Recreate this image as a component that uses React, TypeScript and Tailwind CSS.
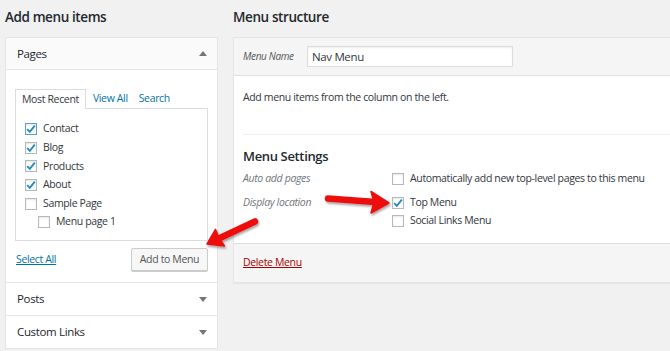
import React from 'react';

const font = { fontFamily: '"Open Sans", "Noto Sans", sans-serif' };

const Check = ({ checked, focus }: { checked?: boolean; focus?: boolean }) => (
  <span
    className={`relative inline-block w-[12px] h-[12px] shrink-0 bg-white border ${
      focus ? 'border-[#5b9dd9]' : 'border-[#b4b9be]'
    } shadow-[inset_0_1px_2px_rgba(0,0,0,0.1)]`}
  >
    {checked && (
      <svg viewBox="0 0 12 12" className="absolute -left-[1px] -top-[1px] w-[12px] h-[12px]">
        <path d="M2.2 6.2 L4.8 8.8 L9.8 2.6" fill="none" stroke="#1e8cbe" strokeWidth="1.8" />
      </svg>
    )}
  </span>
);

const Row = ({ label, checked, focus, indent }: { label: string; checked?: boolean; focus?: boolean; indent?: boolean }) => (
  <div className={`flex items-center gap-[6px] h-[18.6px] ${indent ? 'pl-[13px]' : ''}`}>
    <Check checked={checked} focus={focus} />
    <span>{label}</span>
  </div>
);

const Tri = ({ up }: { up?: boolean }) => (
  <svg viewBox="0 0 8 5" className="w-[8px] h-[5px]">
    <path d={up ? 'M0 5 L4 0 L8 5 Z' : 'M0 0 L4 5 L8 0 Z'} fill="#72777c" />
  </svg>
);

export default function App() {
  return (
    <div
      className="relative w-[670px] h-[351px] overflow-hidden bg-[#f1f1f1] text-[#32373c] text-[10.5px] tracking-[-0.35px] flex"
      style={font}
    >
      {/* left column */}
      <div className="w-[213px] ml-[5px] shrink-0 flex flex-col">
        <div className="h-[37px] pt-[7px] text-[13.5px] font-semibold text-[#23282d] leading-[20px] tracking-[-0.4px]">Add menu items</div>
        <div className="border border-[#e5e5e5] bg-white">
          <div className="h-[32px] bg-[#fafafa] border-b border-[#e5e5e5] flex items-center justify-between pl-[11px] pr-[10px]">
            <span className="text-[11.5px] font-medium text-[#23282d]">Pages</span>
            <Tri up />
          </div>
          <div className="px-[9px] pt-[18px] pb-[11px]">
            <div className="flex items-end h-[20px] text-[10.5px]">
              <div className="h-[20px] px-[6px] border border-b-0 border-[#dcdcde] bg-white relative top-[1px] flex items-center text-[#32373c]">
                Most Recent
              </div>
              <span className="ml-[7px] h-[19px] flex items-center text-[#0073aa]">View All</span>
              <span className="ml-[11px] h-[19px] flex items-center text-[#0073aa]">Search</span>
            </div>
            <div className="border border-[#dcdcde] pl-[9px] pt-[11px] pb-[8px] h-[133px]">
              <Row label="Contact" checked focus />
              <Row label="Blog" checked />
              <Row label="Products" checked />
              <Row label="About" checked />
              <Row label="Sample Page" />
              <Row label="Menu page 1" indent />
            </div>
            <div className="flex items-center justify-between mt-[7px]">
              <span className="text-[#0073aa] underline ml-[1px]">Select All</span>
              <span className="h-[23px] w-[77px] justify-center border border-[#cccccc] bg-[#f7f7f7] rounded-[2px] flex items-center text-[#555] shadow-[0_1px_0_#ccc]">
                Add to Menu
              </span>
            </div>
          </div>
        </div>
        <div className="h-[33px] border border-t-0 border-[#e5e5e5] bg-white flex items-center justify-between pl-[11px] pr-[10px]">
          <span className="text-[11.5px] font-medium text-[#23282d]">Posts</span>
          <Tri />
        </div>
        <div className="h-[33px] border border-t-0 border-[#e5e5e5] bg-white flex items-center justify-between pl-[11px] pr-[10px]">
          <span className="text-[11.5px] font-medium text-[#23282d]">Custom Links</span>
          <Tri />
        </div>
      </div>

      {/* right column */}
      <div className="ml-[15px] w-[460px] shrink-0 flex flex-col">
        <div className="h-[37px] pt-[7px] text-[13.5px] font-semibold text-[#23282d] leading-[20px] tracking-[-0.4px]">Menu structure</div>
        <div className="border border-[#e5e5e5] shadow-[0_1px_1px_rgba(0,0,0,0.04)]">
          <div className="h-[38px] bg-[#f5f5f5] border-b border-[#dfdfdf] flex items-center pl-[9px]">
            <span className="italic text-[10px] text-[#555] w-[64px]">Menu Name</span>
            <div className="w-[206px] h-[21px] bg-white border border-[#ddd] shadow-[inset_0_1px_2px_rgba(0,0,0,0.07)] flex items-center pl-[4px] text-[11.5px] text-[#32373c]">
              Nav Menu
            </div>
          </div>
          <div className="bg-white pl-[9px] pt-[13px] h-[167px]">
            <div className="h-[16px] leading-[16px]">Add menu items from the column on the left.</div>
            <div className="mt-[29px] border-t border-[#eeeeee]" />
            <div className="mt-[12px] text-[13px] font-semibold text-[#23282d] leading-[18px]">Menu Settings</div>
            <div className="mt-[5px] flex">
              <div className="w-[149px] italic text-[#72777c] flex flex-col">
                <span className="h-[18px] flex items-center">Auto add pages</span>
                <span className="h-[30px] flex items-center">Display location</span>
              </div>
              <div className="flex flex-col">
                <div className="flex items-center gap-[6px] h-[18px]">
                  <Check />
                  <span>Automatically add new top-level pages to this menu</span>
                </div>
                <div className="flex items-center gap-[6px] h-[18px] mt-[6px]">
                  <Check checked />
                  <span>Top Menu</span>
                </div>
                <div className="flex items-center gap-[6px] h-[17px]">
                  <Check />
                  <span>Social Links Menu</span>
                </div>
              </div>
            </div>
          </div>
          <div className="h-[39px] bg-[#f5f5f5] border-t border-[#dfdfdf] flex items-center pl-[9px]">
            <span className="text-[#a00] underline">Delete Menu</span>
          </div>
        </div>
      </div>

      {/* annotation arrows */}
      <svg className="absolute inset-0 pointer-events-none" width="670" height="351" viewBox="0 0 670 351">
        <defs>
          <filter id="sh" x="-20%" y="-50%" width="140%" height="200%">
            <feDropShadow dx="1" dy="2" stdDeviation="1.2" floodColor="#000" floodOpacity="0.35" />
          </filter>
        </defs>
        <g filter="url(#sh)" fill="#ee1111" stroke="#ee1111">
          <line x1="328" y1="198.5" x2="375" y2="202" strokeWidth="6.5" strokeLinecap="round" />
          <path d="M389 203 L371 191.5 L374 202 L371 213 Z" strokeWidth="1.5" strokeLinejoin="round" />
          <line x1="255" y1="221.5" x2="221" y2="237.5" strokeWidth="6.5" strokeLinecap="round" />
          <path d="M207 244 L215.5 229.5 L219.5 238.5 L224.5 246 Z" strokeWidth="1.5" strokeLinejoin="round" />
        </g>
      </svg>
    </div>
  );
}
